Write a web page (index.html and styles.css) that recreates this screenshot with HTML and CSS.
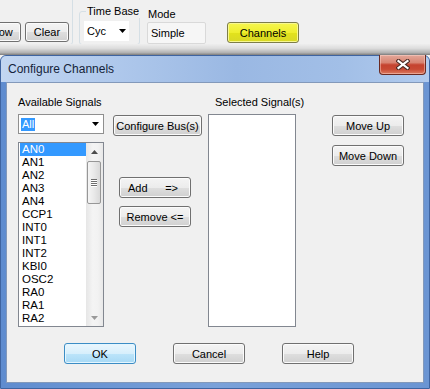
FILE: index.html
```html
<!DOCTYPE html>
<html lang="en">
<head>
    <meta charset="UTF-8">
    <meta name="viewport" content="width=device-width, initial-scale=1.0">
    <title>Configure Channels</title>
    <link rel="stylesheet" href="styles.css">
</head>
<body>

  <div class="toolbar">
    <div class="group-actions">
      <button class="btn tool-btn">Show</button>
      <button class="btn tool-btn">Clear</button>
    </div>
    <fieldset class="timebase">
      <legend>Time Base</legend>
      <div class="combo combo-small">
        <span>Cyc</span>
        <svg class="drop" width="7" height="4" viewBox="0 0 7 4"><path d="M0 0H7L3.5 4Z" fill="#000"/></svg>
      </div>
    </fieldset>
    <div class="mode">
      <div class="mode-label">Mode</div>
      <div class="mode-field">Simple</div>
    </div>
    <button class="btn btn-yellow">Channels</button>
  </div>
  <div class="shadow"></div>

  <div class="window">
    <div class="titlebar">
      <span class="title">Configure Channels</span>
      <button class="close">
        <svg width="14" height="11" viewBox="0 0 14 11">
          <path d="M2.5 2L11.5 9M11.5 2L2.5 9" stroke="#4a2a24" stroke-width="4.2" stroke-linecap="square"/>
          <path d="M2.5 2L11.5 9M11.5 2L2.5 9" stroke="#fff" stroke-width="2.2" stroke-linecap="square"/>
        </svg>
      </button>
    </div>

    <div class="client">
      <div class="columns">
        <div class="col col-available">
          <div class="label">Available Signals</div>
          <div class="combo combo-all">
            <span class="selected-text">All</span>
            <svg class="drop" width="7" height="4" viewBox="0 0 7 4"><path d="M0 0H7L3.5 4Z" fill="#000"/></svg>
          </div>
          <div class="listbox listbox-available">
            <div class="items">
              <div class="item active">AN0</div>
              <div class="item">AN1</div>
              <div class="item">AN2</div>
              <div class="item">AN3</div>
              <div class="item">AN4</div>
              <div class="item">CCP1</div>
              <div class="item">INT0</div>
              <div class="item">INT1</div>
              <div class="item">INT2</div>
              <div class="item">KBI0</div>
              <div class="item">OSC2</div>
              <div class="item">RA0</div>
              <div class="item">RA1</div>
              <div class="item">RA2</div>
            </div>
            <div class="scrollbar">
              <div class="arrow">
                <svg width="7" height="4" viewBox="0 0 7 4"><path d="M0 4H7L3.5 0Z" fill="#4d4d4d"/></svg>
              </div>
              <div class="thumb">
                <span class="grip"></span>
                <span class="grip"></span>
                <span class="grip"></span>
                <span class="grip"></span>
              </div>
              <div class="track"></div>
              <div class="arrow">
                <svg width="7" height="4" viewBox="0 0 7 4"><path d="M0 0H7L3.5 4Z" fill="#9a9a9a"/></svg>
              </div>
            </div>
          </div>
        </div>

        <div class="col col-actions">
          <button class="btn btn-bus">Configure Bus(s)</button>
          <button class="btn btn-add"><span>Add</span><span>=&gt;</span></button>
          <button class="btn btn-remove">Remove &lt;=</button>
        </div>

        <div class="col col-selected">
          <div class="label label-selected">Selected Signal(s)</div>
          <div class="listbox listbox-selected"></div>
        </div>

        <div class="col col-order">
          <button class="btn btn-order">Move Up</button>
          <button class="btn btn-order btn-down">Move Down</button>
        </div>
      </div>

      <div class="footer">
        <button class="btn btn-default">OK</button>
        <button class="btn">Cancel</button>
        <button class="btn">Help</button>
      </div>
    </div>
  </div>

</body>
</html>
```

FILE: styles.css
```css
* {
  box-sizing: border-box;
}

body {
  margin: 0;
  width: 430px;
  height: 389px;
  overflow: hidden;
  background: #f0f0f0;
  font-family: "Liberation Sans", Arial, sans-serif;
  font-size: 11px;
  color: #000;
}

/* Win7 style push button */
.btn {
  font-family: "Liberation Sans", Arial, sans-serif;
  font-size: 11px;
  color: #000;
  height: 21px;
  width: 72px;
  padding: 0;
  border: 1px solid #707070;
  border-radius: 3px;
  background: linear-gradient(#f4f4f4 0%, #ececec 50%, #dedede 52%, #d0d0d0 100%);
  box-shadow: inset 0 0 0 1px #fbfbfb;
}

/* ---------- top toolbar of the main window ---------- */
.toolbar {
  height: 44px;
  display: flex;
  align-items: flex-start;
  overflow: hidden;
}

.group-actions {
  margin: -10px 0 0 -40px;
  width: 113px;
  height: 55px;
  display: flex;
  align-items: flex-end;
  justify-content: flex-end;
  gap: 4px;
  padding: 0 3px 1px 0;
  border: 1px solid #d5dfe5;
  border-radius: 3px;
  box-shadow: inset 1px 1px 0 #fff;
}

.tool-btn {
  width: 44px;
  height: 20px;
  margin-bottom: 1px;
}

.timebase {
  margin: 5px 0 0 6px;
  width: 61px;
  height: 40px;
  padding: 0 0 0 4px;
  border: 1px solid #d5dfe5;
  border-radius: 3px;
  min-width: 0;
}

.timebase legend {
  padding: 0 1px;
  margin-left: 2px;
  line-height: 13px;
  font-size: 11px;
  white-space: nowrap;
}

.combo {
  display: flex;
  align-items: center;
  justify-content: space-between;
  background: #fff;
}

.combo-small {
  width: 45px;
  height: 20px;
  margin: 3px 0 0 0;
  padding: 0 3px 0 3px;
  font-size: 11px;
}

.mode {
  margin: 8px 0 0 7px;
  width: 59px;
}

.mode-label {
  line-height: 13px;
  padding-left: 1px;
}

.mode-field {
  margin-top: 1px;
  height: 22px;
  padding: 4px 3px;
  background: #f6f6f6;
  border: 1px solid #d9d9d9;
  border-radius: 2px;
}

.btn-yellow {
  margin: 22px 0 0 21px;
  height: 21px;
  border: 1px solid #7d7d4a;
  background: linear-gradient(#f6f650 0%, #eeee2e 50%, #e2e21c 52%, #d8d826 100%);
  box-shadow: inset 0 0 0 1px #f8f890;
}

.shadow {
  height: 11px;
  background: linear-gradient(#eeeeee 0%, #dcdcdc 40%, #b0b0b0 80%, #7c7c7c 100%);
}

/* ---------- dialog window ---------- */
.window {
  height: 334px;
  display: flex;
  flex-direction: column;
  padding: 0 5px 5px;
  border: 1px solid #3f64a0;
  border-radius: 6px 6px 0 0;
  background: linear-gradient(to right, #5f8ccf 0%, #7aa1d9 50%, #6b95d3 100%);
}

.titlebar {
  height: 26px;
  margin: 0 -5px;
  padding: 0 3px 0 7px;
  display: flex;
  align-items: flex-start;
  border-radius: 5px 5px 0 0;
  background: linear-gradient(to right, #c2d6f1 0%, #b0c9ec 25%, #9ab8e3 55%, #a2bfe7 80%, #b1cbee 100%);
}

.title {
  margin-top: 6px;
  font-size: 12px;
  line-height: 15px;
  color: #14233a;
}

.close {
  margin: -1px 0 0 auto;
  width: 47px;
  height: 20px;
  padding: 0;
  display: flex;
  align-items: center;
  justify-content: center;
  border: 1px solid #6a2a22;
  border-top: none;
  border-radius: 0 0 4px 4px;
  background: linear-gradient(#e3a89a 0%, #d88472 40%, #c5432f 52%, #c84a34 75%, #dc7c62 100%);
  box-shadow: inset 0 0 0 1px rgba(255, 220, 210, 0.45);
}

.client {
  flex: 1;
  background: #f0f0f0;
  border: 1px solid #8399ba;
  padding: 13px 0 0 11px;
}

.columns {
  display: flex;
  align-items: flex-start;
}

.col {
  display: flex;
  flex-direction: column;
}

.label {
  line-height: 13px;
  white-space: nowrap;
}

.col-available {
  width: 86px;
}

.combo-all {
  margin-top: 5px;
  height: 20px;
  padding: 0 4px 0 2px;
  border: 1px solid #8f8f8f;
}

.selected-text {
  background: #3399ff;
  color: #fff;
  padding: 0 1px;
  line-height: 13px;
}

.listbox {
  background: #fff;
  border: 1px solid #828790;
}

.listbox-available {
  margin-top: 8px;
  height: 185px;
  display: flex;
}

.items {
  flex: 1;
  padding: 0 0 0 1px;
}

.item {
  line-height: 13px;
  padding-left: 2px;
  font-size: 11.5px;
}

.item.active {
  background: #3399ff;
  color: #fff;
}

.scrollbar {
  width: 17px;
  display: flex;
  flex-direction: column;
  background: linear-gradient(to right, #e6e6e6, #f4f4f4 40%, #f2f2f2 70%, #e8e8e8);
}

.arrow {
  height: 17px;
  display: flex;
  align-items: center;
  justify-content: center;
}

.thumb {
  margin: 1px 2px 0 1px;
  height: 43px;
  display: flex;
  flex-direction: column;
  align-items: center;
  justify-content: center;
  gap: 1px;
  border: 1px solid #979797;
  border-radius: 2px;
  background: linear-gradient(to right, #f5f5f5, #e9e9e9 50%, #d9d9d9);
}

.grip {
  width: 6px;
  height: 1px;
  background: #6e6e6e;
  box-shadow: 0 1px 0 #fff;
}

.track {
  flex: 1;
}

.col-actions {
  width: 89px;
  margin-left: 9px;
  margin-top: 19px;
}

.btn-bus {
  width: 89px;
  height: 21px;
}

.btn-add {
  margin: 41px 0 0 6px;
  display: flex;
  align-items: center;
  justify-content: space-between;
  padding: 0 12px 0 8px;
}

.btn-remove {
  margin: 8px 0 0 6px;
}

.col-selected {
  width: 88px;
  margin-left: 6px;
}

.label-selected {
  padding-left: 7px;
}

.listbox-selected {
  margin-top: 5px;
  height: 213px;
}

.col-order {
  margin-left: 36px;
  margin-top: 19px;
}

.btn-down {
  margin-top: 9px;
}

.footer {
  display: flex;
  gap: 37px;
  margin-top: 16px;
  padding-left: 46px;
}

.btn-default {
  border-color: #3c8dc5;
  background: linear-gradient(#eaf6fd 0%, #d7effc 50%, #bce4fa 52%, #a7d9f5 100%);
  box-shadow: inset 0 0 0 1px #e4f6ff;
}
```
